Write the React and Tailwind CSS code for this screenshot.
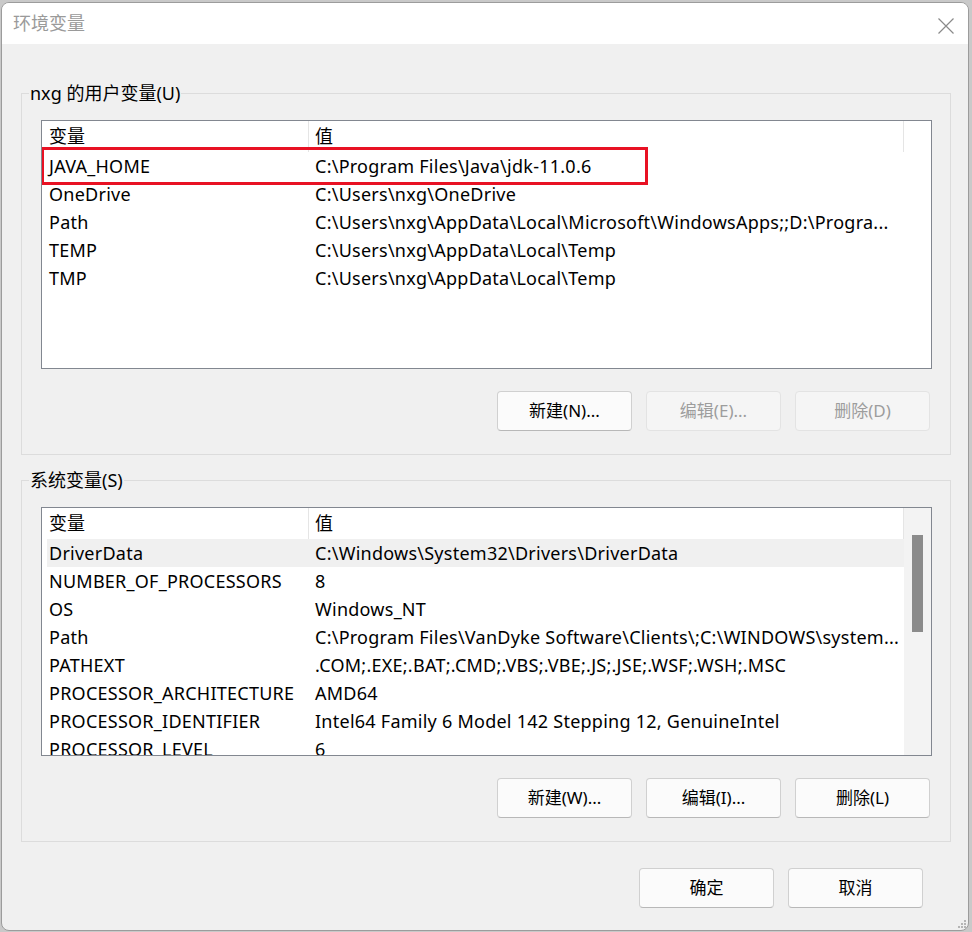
import React from 'react';

const userVars = [
  ['JAVA_HOME', 'C:\\Program Files\\Java\\jdk-11.0.6'],
  ['OneDrive', 'C:\\Users\\nxg\\OneDrive'],
  ['Path', 'C:\\Users\\nxg\\AppData\\Local\\Microsoft\\WindowsApps;;D:\\Progra...'],
  ['TEMP', 'C:\\Users\\nxg\\AppData\\Local\\Temp'],
  ['TMP', 'C:\\Users\\nxg\\AppData\\Local\\Temp'],
];

const sysVars = [
  ['DriverData', 'C:\\Windows\\System32\\Drivers\\DriverData'],
  ['NUMBER_OF_PROCESSORS', '8'],
  ['OS', 'Windows_NT'],
  ['Path', 'C:\\Program Files\\VanDyke Software\\Clients\\;C:\\WINDOWS\\system...'],
  ['PATHEXT', '.COM;.EXE;.BAT;.CMD;.VBS;.VBE;.JS;.JSE;.WSF;.WSH;.MSC'],
  ['PROCESSOR_ARCHITECTURE', 'AMD64'],
  ['PROCESSOR_IDENTIFIER', 'Intel64 Family 6 Model 142 Stepping 12, GenuineIntel'],
  ['PROCESSOR_LEVEL', '6'],
];

const Button = ({ children, disabled }) => (
  <button
    className={
      disabled
        ? 'w-[135px] h-[40px] rounded-[4px] border border-[#e3e3e3] bg-[#f5f5f5] text-[#9d9d9d] text-[17px]'
        : 'w-[135px] h-[40px] rounded-[4px] border border-[#d0d0d0] border-b-[#b8b8b8] bg-[#fbfbfb] text-black text-[17px]'
    }
  >
    {children}
  </button>
);

const VarList = ({ rows, selected, highlight, scroll }) => (
  <div className="relative w-[891px] h-[249px] border border-[#828790] bg-white overflow-hidden">
    <div className="flex h-[31px] items-center">
      <div className="w-[266px] h-full pl-[7px] flex items-center">变量</div>
      <div className="w-px h-full bg-[#e5e5e5]" />
      <div className="w-[594px] h-full pl-[6px] flex items-center">值</div>
      <div className="w-px h-full bg-[#e5e5e5]" />
    </div>
    {rows.map(([name, value], i) => (
      <div
        key={name + i}
        className={
          'ml-[5px] w-[857px] h-[28px] flex items-center whitespace-nowrap tracking-[0.25px] ' +
          (i === selected ? 'bg-[#f0f0f0]' : '')
        }
      >
        <div className="w-[266px] pl-[2px] overflow-hidden">{name}</div>
        <div className="flex-1 pl-[2px] overflow-hidden">{value}</div>
      </div>
    ))}
    {highlight && (
      <div className="absolute left-[-1px] top-[26px] w-[607px] h-[38px] border-[3px] border-[#e81123]" />
    )}
    {scroll && (
      <div className="absolute right-0 top-0 w-[27px] h-full bg-[#f3f3f3]">
        <div className="absolute left-[8px] top-[27px] w-[11px] h-[97px] bg-[#8b8b8b]" />
      </div>
    )}
  </div>
);

const Group = ({ title, children, className }) => (
  <div className={'relative w-[930px] border border-[#dcdcdc] pl-[19px] pt-[26px] pb-[23px] ' + className}>
    <span className="absolute left-[7px] top-[-13px] px-[1px] leading-[24px] bg-[#f0f0f0]">{title}</span>
    {children}
  </div>
);

export default function App() {
  return (
    <div className="w-[972px] h-[932px] bg-[#c9c9c9] pt-[2px] pl-[1px] font-['Noto_Sans','Noto_Sans_CJK_SC',sans-serif] text-[18px] text-black">
      <div className="relative w-[968px] h-[929px] border border-[#9c9c9c] rounded-[8px] overflow-hidden flex flex-col bg-[#f0f0f0]">
        <div className="h-[41px] bg-white flex items-center justify-between pl-[11px] pr-[14px]">
          <span className="text-[#9a9a9a] text-[18px]">环境变量</span>
          <svg width="16" height="16" viewBox="0 0 16 16" className="mt-[4px]">
            <path d="M0.5 0.5 L15.5 15.5 M15.5 0.5 L0.5 15.5" stroke="#8a8a8a" strokeWidth="1.2" fill="none" />
          </svg>
        </div>
        <div className="flex-1 pl-[19px] pt-[49px]">
          <Group title="nxg 的用户变量(U)">
            <VarList rows={userVars} highlight />
            <div className="mt-[22px] w-[891px] pr-[2px] flex justify-end gap-[14px]">
              <Button>新建(N)...</Button>
              <Button disabled>编辑(E)...</Button>
              <Button disabled>删除(D)</Button>
            </div>
          </Group>
          <Group title="系统变量(S)" className="mt-[25px]">
            <VarList rows={sysVars} selected={0} scroll />
            <div className="mt-[22px] w-[891px] pr-[2px] flex justify-end gap-[14px]">
              <Button>新建(W)...</Button>
              <Button>编辑(I)...</Button>
              <Button>删除(L)</Button>
            </div>
          </Group>
          <div className="mt-[26px] w-[930px] pr-[28px] flex justify-end gap-[14px]">
            <Button>确定</Button>
            <Button>取消</Button>
          </div>
        </div>
        <svg width="10" height="10" viewBox="0 0 10 10" className="absolute right-[1px] bottom-[1px]">
          <rect x="7" y="1" width="2" height="2" fill="#b5b5b5" />
          <rect x="4" y="4" width="2" height="2" fill="#b5b5b5" />
          <rect x="7" y="4" width="2" height="2" fill="#b5b5b5" />
          <rect x="1" y="7" width="2" height="2" fill="#b5b5b5" />
          <rect x="4" y="7" width="2" height="2" fill="#b5b5b5" />
          <rect x="7" y="7" width="2" height="2" fill="#b5b5b5" />
        </svg>
      </div>
    </div>
  );
}
